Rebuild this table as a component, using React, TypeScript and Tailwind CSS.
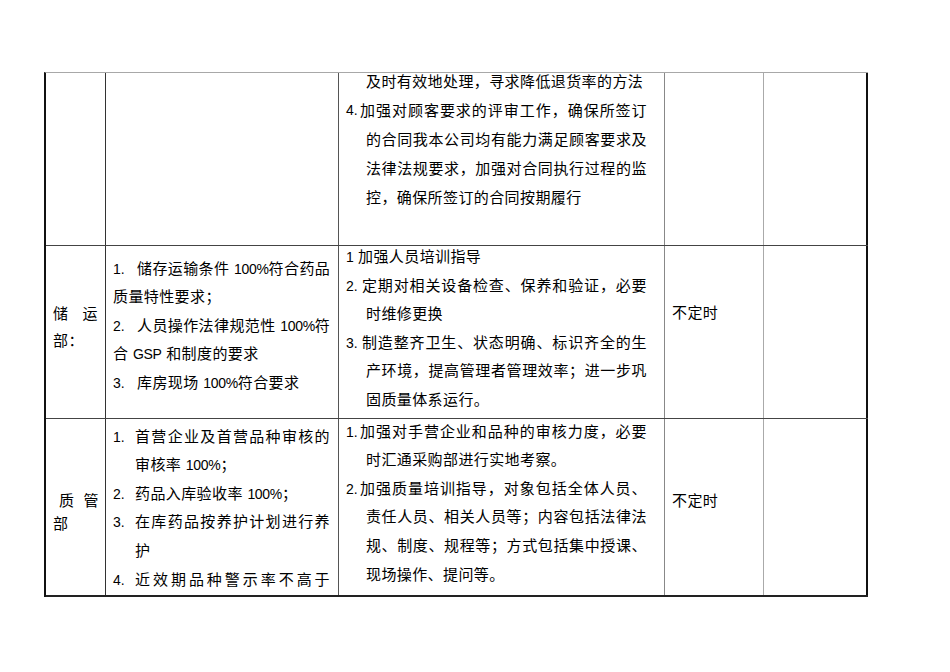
type Line = { n?: string; t: string; j?: boolean; c?: boolean }

// Latin runs (digits, GSP, %) are set a bit tighter, like the narrow digits of the scan
function Txt({ s }: { s: string }) {
  const parts = s.split(/([0-9A-Za-z%.]+)/)
  return (
    <>
      {parts.map((p, i) =>
        i % 2 ? (
          <span key={i} className="text-[14px] tracking-[-0.3px]">
            {p}
          </span>
        ) : (
          p
        )
      )}
    </>
  )
}

function Para({ lines, numW = "", contW = "", lh }: { lines: Line[]; numW?: string; contW?: string; lh: string }) {
  return (
    <>
      {lines.map((l, i) => (
        <div key={i} className={`flex whitespace-nowrap ${lh}`}>
          {l.n ? (
            <span className={`shrink-0 text-[14px] tracking-normal ${numW}`}>{l.n}</span>
          ) : l.c ? (
            <span className={`shrink-0 ${contW}`} />
          ) : null}
          <span className={`min-w-0 flex-1 ${l.j ? "text-justify [text-align-last:justify]" : ""}`}>
            <Txt s={l.t} />
          </span>
        </div>
      ))}
    </>
  )
}

const row1c3: Line[] = [
  { c: true, t: "及时有效地处理，寻求降低退货率的方法" },
  { n: "4.", t: "加强对顾客要求的评审工作，确保所签订", j: true },
  { c: true, t: "的合同我本公司均有能力满足顾客要求及", j: true },
  { c: true, t: "法律法规要求，加强对合同执行过程的监", j: true },
  { c: true, t: "控，确保所签订的合同按期履行" },
]

const row2c2: Line[] = [
  { n: "1.", t: "储存运输条件 100%符合药品", j: true },
  { t: "质量特性要求；" },
  { n: "2.", t: "人员操作法律规范性 100%符", j: true },
  { t: "合 GSP 和制度的要求" },
  { n: "3.", t: "库房现场 100%符合要求" },
]

const row2c3: Line[] = [
  { t: "1 加强人员培训指导" },
  { n: "2.", t: "定期对相关设备检查、保养和验证，必要", j: true },
  { c: true, t: "时维修更换" },
  { n: "3.", t: "制造整齐卫生、状态明确、标识齐全的生", j: true },
  { c: true, t: "产环境，提高管理者管理效率；进一步巩", j: true },
  { c: true, t: "固质量体系运行。" },
]

const row3c2: Line[] = [
  { n: "1.", t: "首营企业及首营品种审核的", j: true },
  { c: true, t: "审核率 100%；" },
  { n: "2.", t: "药品入库验收率 100%；" },
  { n: "3.", t: "在库药品按养护计划进行养", j: true },
  { c: true, t: "护" },
  { n: "4.", t: "近效期品种警示率不高于", j: true },
]

const row3c3: Line[] = [
  { n: "1.", t: "加强对手营企业和品种的审核力度，必要", j: true },
  { c: true, t: "时汇通采购部进行实地考察。" },
  { n: "2.", t: "加强质量培训指导，对象包括全体人员、", j: true },
  { c: true, t: "责任人员、相关人员等；内容包括法律法", j: true },
  { c: true, t: "规、制度、规程等；方式包括集中授课、", j: true },
  { c: true, t: "现场操作、提问等。" },
]

export default function App() {
  return (
    <div
      className="min-h-[672px] w-[950px] bg-white pt-[72px] text-[15px] tracking-[0.4px] text-black"
      style={{ fontFamily: '"Liberation Sans", "Noto Sans CJK SC", sans-serif' }}
    >
      <div className="ml-[44px] w-[824px] border-t border-l-2 border-t-[#a8a8a8] border-l-[#111]">
        {/* 续上页 */}
        <div className="flex h-[173px] border-b border-[#444]">
          <div className="w-[60px] shrink-0 border-r border-[#333]" />
          <div className="w-[233px] shrink-0 border-r border-[#555]" />
          <div className="w-[326px] shrink-0 border-r border-[#888] pr-[17px] pl-[7px]">
            <div className="-mt-[6.5px]">
              <Para lines={row1c3} numW="w-[14px]" contW="w-[20px]" lh="leading-[29px]" />
            </div>
          </div>
          <div className="w-[99px] shrink-0 border-r border-[#aaa]" />
          <div className="w-[104px] shrink-0 border-r-2 border-[#111]" />
        </div>

        {/* 储运部 */}
        <div className="flex h-[173px] border-b border-[#444]">
          <div className="w-[60px] shrink-0 border-r border-[#333] px-[7px] pt-[53.5px] leading-[27px]">
            <div className="text-justify [text-align-last:justify]">储运</div>
            <div>部：</div>
          </div>
          <div className="w-[233px] shrink-0 overflow-hidden border-r border-[#555] pt-[8.7px] pr-[8px] pl-[7px]">
            <Para lines={row2c2} numW="w-[24px]" lh="leading-[28.5px]" />
          </div>
          <div className="w-[326px] shrink-0 border-r border-[#888] pr-[17px] pl-[7px]">
            <div className="-mt-[3px]">
              <Para lines={row2c3} numW="w-[16px]" contW="w-[20px]" lh="leading-[28.6px]" />
            </div>
          </div>
          <div className="w-[99px] shrink-0 border-r border-[#aaa] pt-[53px] pl-[7px] leading-[28px]">不定时</div>
          <div className="w-[104px] shrink-0 border-r-2 border-[#111]" />
        </div>

        {/* 质管部 */}
        <div className="flex h-[178px] border-b-2 border-[#222]">
          <div className="w-[60px] shrink-0 border-r border-[#333] pt-[69.5px] pr-[6px] pl-[7px] leading-[23px]">
            <div className="pl-[6px] text-justify [text-align-last:justify]">质管</div>
            <div>部</div>
          </div>
          <div className="w-[233px] shrink-0 overflow-hidden border-r border-[#555] pt-[3.7px] pr-[8px] pl-[7px]">
            <Para lines={row3c2} numW="w-[22px]" contW="w-[22px]" lh="leading-[28.6px]" />
          </div>
          <div className="w-[326px] shrink-0 overflow-hidden border-r border-[#888] pr-[17px] pl-[7px]">
            <div className="-mt-[1.3px]">
              <Para lines={row3c3} numW="w-[14px]" contW="w-[20px]" lh="leading-[28.6px]" />
            </div>
          </div>
          <div className="w-[99px] shrink-0 border-r border-[#aaa] pt-[68px] pl-[7px] leading-[28px]">不定时</div>
          <div className="w-[104px] shrink-0 border-r-2 border-[#111]" />
        </div>
      </div>
    </div>
  )
}
